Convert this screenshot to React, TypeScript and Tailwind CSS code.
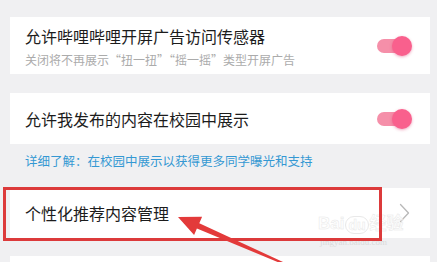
import React from "react";

function Toggle() {
  return (
    <div className="relative w-[35px] h-[20px] shrink-0">
      <div className="absolute left-0 top-[3px] w-[29px] h-[14px] rounded-full bg-[#f58fa9]" />
      <div className="absolute right-0 top-0 w-[20px] h-[20px] rounded-full bg-[#f9608d] shadow-[0_1px_3px_rgba(220,60,110,0.45)]" />
    </div>
  );
}

export default function App() {
  return (
    <div
      className="relative w-[437px] h-[262px] overflow-hidden bg-[#f0f0f2]"
      style={{ fontFamily: '"Noto Sans CJK SC", "Noto Sans", sans-serif' }}
    >
      <div className="flex flex-col pt-[17px] pl-[10px] pr-[7px]">
        {/* Card 1 */}
        <div className="h-[57px] bg-white flex items-start justify-between pl-[15px] pr-[18px]">
          <div className="flex flex-col pt-[9px]">
            <div className="text-[16px] leading-[20px] text-[#1c1c1c]">允许哔哩哔哩开屏广告访问传感器</div>
            <div className="mt-[6px] text-[12px] leading-[16px] text-[#ababab]">关闭将不再展示“扭一扭”“摇一摇”类型开屏广告</div>
          </div>
          <div className="self-center">
            <Toggle />
          </div>
        </div>

        {/* Card 2 */}
        <div className="mt-[19px] h-[51px] bg-white flex items-center justify-between pl-[15px] pr-[18px]">
          <div className="text-[16px] leading-[20px] text-[#1c1c1c]">允许我发布的内容在校园中展示</div>
          <Toggle />
        </div>

        {/* Blue hint */}
        <div className="h-[44px] pl-[15px] pt-[9px]">
          <div className="text-[12.5px] leading-[16px] text-[#3498d3]">详细了解：在校园中展示以获得更多同学曝光和支持</div>
        </div>

        {/* Card 3 */}
        <div className="h-[50px] bg-white flex items-center justify-between pl-[15px] pr-[20px]">
          <div className="text-[16px] leading-[20px] text-[#1c1c1c]">个性化推荐内容管理</div>
          <svg width="11" height="20" viewBox="0 0 11 20" fill="none">
            <path d="M1.5 1.5 L9.5 10 L1.5 18.5" stroke="#b8b8b8" strokeWidth="1.3" strokeLinecap="round" strokeLinejoin="round" />
          </svg>
        </div>

        {/* Card 4 */}
        <div className="mt-[18px] h-[40px] bg-white" />
      </div>

      {/* Watermark */}
      <div className="absolute left-[318px] top-[196px] flex flex-col items-center pointer-events-none opacity-70">
        <div className="flex items-end gap-[1px] text-[17px] leading-[20px] font-bold text-white [-webkit-text-stroke:0.5px_#dedede] mt-[18px]" style={{ fontFamily: '"Liberation Sans", "Noto Sans CJK SC", sans-serif' }}>
          <span>Bai</span>
          <span className="rounded-full border border-[#e0e0e0] px-[2px] text-[14px] leading-[16px]">du</span>
          <span>经验</span>
        </div>
      </div>
      <div className="absolute left-[320px] top-[237px] text-[9px] leading-[10px] text-[#dadada] pointer-events-none" style={{ fontFamily: '"Liberation Serif", serif' }}>
        jingyan.baidu.com
      </div>

      {/* Red annotation box */}
      <div className="absolute left-[3px] top-[187px] w-[379px] h-[54px] border-[3.5px] border-[#dc3a3b] pointer-events-none" />

      {/* Red arrow */}
      <svg className="absolute left-0 top-0 pointer-events-none" width="437" height="262" viewBox="0 0 437 262">
        <polygon
          points="178,217 202.1,216.8 199.3,223.2 285.4,263.1 284.6,264.9 196.9,228.6 194.1,235"
          fill="#e33a3a"
        />
      </svg>
    </div>
  );
}
